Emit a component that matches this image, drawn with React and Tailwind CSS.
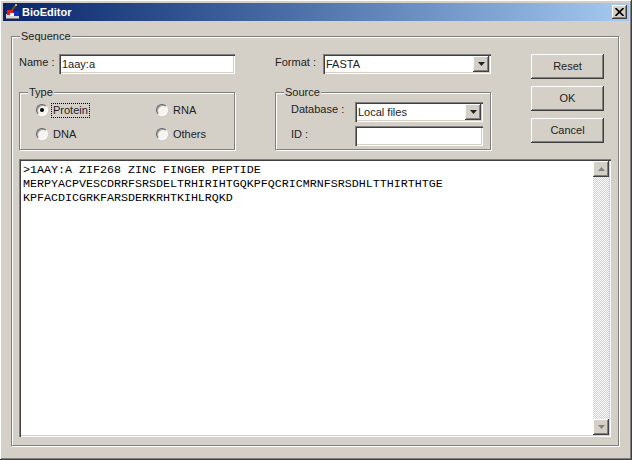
const raised = 'shadow-[inset_-1px_-1px_0_#404040,inset_1px_1px_0_#ffffff,inset_-2px_-2px_0_#808080,inset_2px_2px_0_#d4d0c8]';
const sunken = 'shadow-[inset_1px_1px_0_#808080,inset_2px_2px_0_#404040,inset_-1px_-1px_0_#ffffff,inset_-2px_-2px_0_#d4d0c8]';
const groove = 'border border-[#808080] shadow-[1px_1px_0_#ffffff,inset_1px_1px_0_#ffffff]';

function AppIcon() {
  return (
    <svg width="16" height="16" viewBox="0 0 16 16" className="shrink-0">
      <path d="M7 6 L11 1" stroke="#6a5a20" strokeWidth="2" />
      <rect x="10" y="0" width="2" height="2" fill="#c8b060" />
      <rect x="1" y="10" width="13" height="5" fill="#d8d8d8" />
      <rect x="1" y="14" width="13" height="1" fill="#808080" />
      <rect x="2" y="6" width="6" height="5" fill="#e02020" />
      <rect x="8" y="7" width="6" height="5" fill="#1030c0" />
      <rect x="5" y="9" width="4" height="3" fill="#ffffff" />
    </svg>
  );
}

function Arrow({ color = '#000000' }) {
  return (
    <svg width="7" height="4" viewBox="0 0 7 4">
      <path d="M0 0 H7 L3.5 4 Z" fill={color} />
    </svg>
  );
}

function ArrowButton() {
  return (
    <div className={`w-[16px] h-[16px] flex items-center justify-center bg-[#d4d0c8] ${raised}`}>
      <Arrow color="#222222" />
    </div>
  );
}

function Group({ label, className, labelClass, children }) {
  return (
    <div className={`relative ${groove} ${className}`}>
      <span className={`absolute top-[-8px] bg-[#d4d0c8] px-px leading-[14px] ${labelClass}`}>{label}</span>
      {children}
    </div>
  );
}

function Field({ className, children }) {
  return (
    <div className={`flex items-center bg-white pl-[3px] ${sunken} ${className}`}>{children}</div>
  );
}

function Select({ value, className }) {
  return (
    <Field className={`justify-between pr-[2px] ${className}`}>
      <span>{value}</span>
      <ArrowButton />
    </Field>
  );
}

function Radio({ label, checked, focused }) {
  return (
    <div className="flex items-center gap-[5px] h-[16px]">
      <div className="w-[12px] h-[12px] rounded-full bg-[#f4f3f0] border border-t-[#606060] border-l-[#606060] border-r-white border-b-white shadow-[inset_1px_1px_0_#a0a0a0] flex items-center justify-center">
        {checked && <div className="w-[4px] h-[4px] rounded-full bg-black" />}
      </div>
      <span className={focused ? 'outline-1 outline-dotted outline-black leading-[13px] px-px -ml-px' : ''}>{label}</span>
    </div>
  );
}

function PushButton({ children }) {
  return (
    <button className={`w-[73px] h-[25px] bg-[#d4d0c8] text-center ${raised}`}>{children}</button>
  );
}

export default function App() {
  return (
    <div className={`w-[632px] h-[460px] bg-[#d4d0c8] p-[3px] flex flex-col text-[11px] text-[#222] font-['Liberation_Sans',sans-serif] ${raised}`}>
      <div className="h-[18px] shrink-0 flex items-center pl-[2px] pr-[2px] bg-gradient-to-r from-[#0a246a] to-[#a6caf0]">
        <AppIcon />
        <span className="ml-px text-white font-bold text-[11px]">BioEditor</span>
        <button className={`ml-auto w-[15px] h-[14px] bg-[#d4d0c8] flex items-center justify-center ${raised}`}>
          <svg width="9" height="8" viewBox="0 0 9 8">
            <path d="M0.5 0 L8.5 8 M8.5 0 L0.5 8" stroke="#000" strokeWidth="1.6" />
          </svg>
        </button>
      </div>

      <Group
        label="Sequence"
        labelClass="left-[8px]"
        className="mt-[15px] ml-[8px] mr-[10px] mb-[11px] flex-1 flex flex-col pt-[17px] pl-[7px] pr-[7px] pb-[8px]"
      >
        <div className="flex">
          <div className="w-[216px] flex flex-col">
            <div className="flex items-center h-[20px]">
              <span className="-mt-[3px]">Name :</span>
              <Field className="ml-auto w-[176px] h-[20px]">1aay:a</Field>
            </div>
            <Group label="Type" labelClass="left-[8px]" className="mt-[18px] h-[58px] grid grid-cols-[120px_1fr] content-start gap-y-[8px] pl-[16px] pt-[9px]">
              <Radio label="Protein" checked focused />
              <Radio label="RNA" />
              <Radio label="DNA" />
              <Radio label="Others" />
            </Group>
          </div>

          <div className="w-[216px] ml-[40px] flex flex-col">
            <div className="flex items-center h-[20px]">
              <span className="-mt-[3px]">Format :</span>
              <Select value="FASTA" className="ml-auto w-[168px] h-[20px]" />
            </div>
            <Group label="Source" labelClass="left-[8px]" className="mt-[18px] h-[58px] flex flex-col gap-[4px] pt-[9px] pl-[15px] pr-[7px]">
              <div className="flex items-center h-[20px]">
                <span className="-mt-[5px]">Database :</span>
                <Select value="Local files" className="ml-auto w-[128px] h-[20px]" />
              </div>
              <div className="flex items-center h-[20px]">
                <span className="-mt-[4px]">ID :</span>
                <Field className="ml-auto w-[128px] h-[20px]" />
              </div>
            </Group>
          </div>

          <div className="ml-[40px] flex flex-col gap-[7px]">
            <PushButton>Reset</PushButton>
            <PushButton>OK</PushButton>
            <PushButton>Cancel</PushButton>
          </div>
        </div>

        <div className={`mt-[9px] flex-1 flex bg-white p-[2px] ${sunken}`}>
          <pre className="flex-1 pt-[2px] pl-[2px] font-['Liberation_Mono',monospace] text-[11.67px] leading-[14px] text-black">
{`>1AAY:A ZIF268 ZINC FINGER PEPTIDE
MERPYACPVESCDRRFSRSDELTRHIRIHTGQKPFQCRICMRNFSRSDHLTTHIRTHTGE
KPFACDICGRKFARSDERKRHTKIHLRQKD`}
          </pre>
          <div className="w-[16px] flex flex-col bg-[#f0eee9] bg-[conic-gradient(#d4d0c8_25%,#ffffff_0_50%,#d4d0c8_0_75%,#ffffff_0)] bg-[length:2px_2px]">
            <div className={`h-[16px] flex items-center justify-center bg-[#d4d0c8] ${raised}`}>
              <div className="rotate-180 flex"><Arrow color="#808080" /></div>
            </div>
            <div className={`mt-auto h-[16px] flex items-center justify-center bg-[#d4d0c8] ${raised}`}>
              <Arrow color="#808080" />
            </div>
          </div>
        </div>
      </Group>
    </div>
  );
}
